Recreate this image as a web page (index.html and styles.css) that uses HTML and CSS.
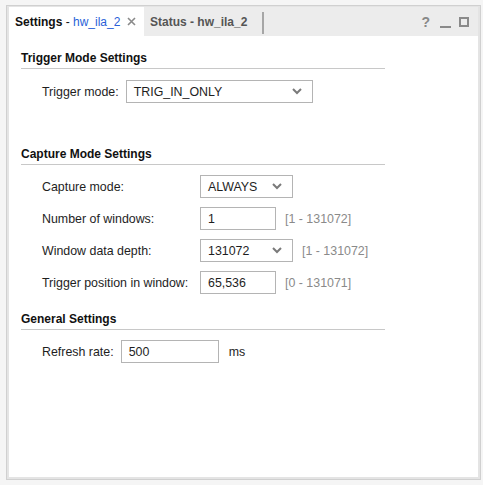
FILE: index.html
```html
<!DOCTYPE html>
<html>
<head>
<meta charset="utf-8">
<link rel="stylesheet" href="styles.css">
</head>
<body>
<div class="frame">
  <div class="tabbar">
    <div class="tab active">
      <span class="tname">Settings</span><span class="dash"> - </span><span class="tinst">hw_ila_2</span>
      <svg class="close" width="9" height="9" viewBox="0 0 9 9"><path d="M1 1 L8 8 M8 1 L1 8" stroke="#8a8a8a" stroke-width="1.6" fill="none"/></svg>
    </div>
    <div class="tab inactive">Status - hw_ila_2</div>
    <div class="sep"></div>
    <div class="spacer"></div>
    <div class="tools">
      <span class="help">?</span>
      <span class="minim"></span>
      <span class="maxim"></span>
    </div>
  </div>
  <div class="content">
    <div class="section first">
      <div class="shead">Trigger Mode Settings</div>
      <div class="row simple">
        <span class="label">Trigger mode:</span>
        <div class="select wide"><span>TRIG_IN_ONLY</span><svg width="10" height="7" viewBox="0 0 10 7"><polyline points="1,1 5,5 9,1" stroke="#7a7a7a" stroke-width="2" fill="none"/></svg></div>
      </div>
    </div>
    <div class="section capture">
      <div class="shead">Capture Mode Settings</div>
      <div class="grid">
        <span class="label">Capture mode:</span>
        <div class="cell"><div class="select mid"><span>ALWAYS</span><svg width="10" height="7" viewBox="0 0 10 7"><polyline points="1,1 5,5 9,1" stroke="#7a7a7a" stroke-width="2" fill="none"/></svg></div></div>
        <span class="label">Number of windows:</span>
        <div class="cell"><div class="input small">1</div><span class="range">[1 - 131072]</span></div>
        <span class="label">Window data depth:</span>
        <div class="cell"><div class="select mid"><span>131072</span><svg width="10" height="7" viewBox="0 0 10 7"><polyline points="1,1 5,5 9,1" stroke="#7a7a7a" stroke-width="2" fill="none"/></svg></div><span class="range">[1 - 131072]</span></div>
        <span class="label">Trigger position in window:</span>
        <div class="cell"><div class="input small">65,536</div><span class="range">[0 - 131071]</span></div>
      </div>
    </div>
    <div class="section general">
      <div class="shead">General Settings</div>
      <div class="row simple refresh-row">
        <span class="label">Refresh rate:</span>
        <div class="input refresh">500</div>
        <span class="unit">ms</span>
      </div>
    </div>
  </div>
</div>
</body>
</html>
```

FILE: styles.css
```css
* { box-sizing: border-box; }
html, body { margin: 0; padding: 0; }
body {
  background: #f5f5f5;
  font-family: "Liberation Sans", Arial, sans-serif;
  font-size: 12px;
  color: #1e1e1e;
  width: 483px;
  height: 485px;
  overflow: hidden;
}
.frame {
  margin: 5px 0 0 6px;
  width: 475px;
  height: 475px;
  border: 1px solid #d0d0d0;
  padding: 1px 2px 2px 2px;
  background: #e4e4e4;
  display: flex;
  flex-direction: column;
}
.tabbar {
  height: 29px;
  display: flex;
  align-items: stretch;
  background: #ececec;
  flex: none;
}
.tab {
  display: flex;
  align-items: center;
  white-space: nowrap;
}
.tab.active {
  background: #ffffff;
  padding: 0 7px 0 6px;
  width: 135px;
}
.tname { font-weight: bold; color: #111; }
.dash { color: #111; white-space: pre; }
.tinst { color: #2a5fd8; }
.close { margin-left: 7px; }
.tab.inactive {
  font-weight: bold;
  color: #555;
  padding: 0 7px 0 6px;
  width: 118px;
}
.sep {
  width: 2px;
  background: #a6a6a6;
  margin: 5px 0 2px 0;
}
.spacer { flex: 1; }
.tools {
  display: flex;
  align-items: center;
  padding-right: 9px;
}
.help {
  font-weight: bold;
  color: #888;
  font-size: 14px;
  margin-right: 10px;
}
.minim {
  width: 11px;
  height: 2px;
  background: #8a8a8a;
  margin-top: 10px;
  margin-right: 8px;
}
.maxim {
  width: 10px;
  height: 10px;
  border: 2px solid #8a8a8a;
}
.content {
  flex: 1;
  background: #ffffff;
  padding: 0 0 0 12px;
  font-size: 12.4px;
}
.section { width: 364px; }
.section.first { padding-top: 15px; }
.section.capture { padding-top: 44px; }
.section.general { padding-top: 18px; }
.shead {
  font-weight: bold;
  font-size: 12px;
  line-height: 14px;
  padding-bottom: 3px;
  border-bottom: 1px solid #c8c8c8;
  color: #111;
}
.row.simple {
  display: flex;
  align-items: center;
  padding-left: 21px;
  margin-top: 11px;
}
.row.refresh-row { margin-top: 10px; }
.label { white-space: nowrap; }
.row.simple .label { margin-right: 7px; }
.select {
  height: 23px;
  border: 1px solid #b4b4b4;
  display: flex;
  align-items: center;
  justify-content: space-between;
  padding: 0 10px 0 7px;
  background: #fff;
}
.select.wide { width: 187px; }
.select.mid { width: 93px; }
.input {
  height: 23px;
  border: 1px solid #b4b4b4;
  display: flex;
  align-items: center;
  padding: 0 7px;
  background: #fff;
}
.input.small { width: 76px; }
.input.refresh { width: 98px; }
.unit { margin-left: 10px; }
.grid {
  display: grid;
  grid-template-columns: 158px auto;
  row-gap: 9px;
  padding-left: 21px;
  margin-top: 10px;
  align-items: center;
}
.cell { display: flex; align-items: center; }
.range { color: #8a8a8a; margin-left: 9px; }
```
